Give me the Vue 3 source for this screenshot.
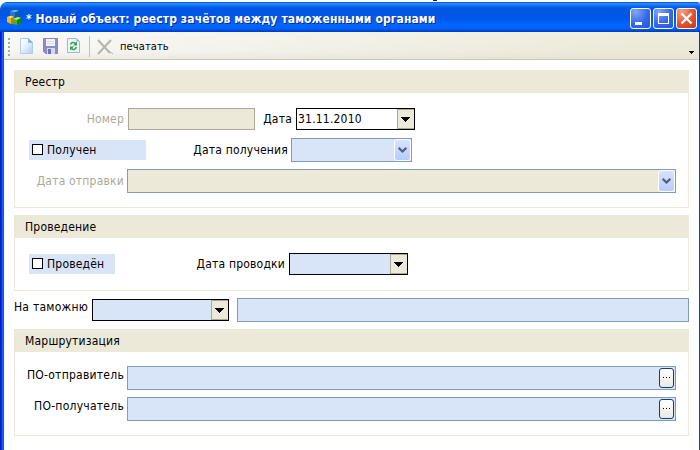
<script setup>
const toolbarDots = [0, 1, 2, 3, 4]
</script>

<template>
  <div class="window">
    <div class="above"><i></i></div>
    <header class="titlebar">
      <svg class="app-icon" width="15" height="16" viewBox="0 0 15 16">
        <path d="M3 1l6-1 3 1v7l-4 1-5-1z" fill="#2878c8" />
        <path d="M3 1l6-1 3 1-4 1z" fill="#85c8f4" />
        <path d="M8 2l4-1v7l-4 1z" fill="#125aa5" />
        <path d="M0 7l4-1 3 1v6l-3 1-4-2z" fill="#f3b51d" />
        <path d="M0 7l4-1 3 1-3 1z" fill="#ffe777" />
        <path d="M4 8l3-1v6l-3 1z" fill="#ce7900" />
        <path d="M6 9l5-2 3 1v5l-4 2-4-1z" fill="#45b51e" />
        <path d="M6 9l5-2 3 1-4 2z" fill="#b0ea76" />
        <path d="M10 10l4-2v5l-4 2z" fill="#16801a" />
      </svg>
      <span class="title">* Новый объект: реестр зачётов между таможенными органами</span>
      <div class="controls">
        <button class="ctl"><svg width="21" height="21"><path d="M5 14h7v3H5z" fill="#fff" /></svg></button>
        <button class="ctl"><svg width="21" height="21"><path d="M5 5h11v11H5zM6 8v7h9V8z" fill="#fff" fill-rule="evenodd" /></svg></button>
        <button class="ctl close"><svg width="21" height="21"><path d="M5.5 5.5l10 10M15.5 5.5l-10 10" stroke="#fff" stroke-width="2.2" /></svg></button>
      </div>
    </header>
    <div class="body">
      <div class="frame-left"></div>
      <div class="client">
        <div class="toolbar">
          <div class="grip"><i v-for="d in toolbarDots" :key="d"></i></div>
          <svg class="new" width="14" height="17" viewBox="0 0 14 17">
            <defs><linearGradient id="paper" x2="1" y2="1"><stop stop-color="#fff" /><stop offset=".4" stop-color="#e9f4fd" /><stop offset="1" stop-color="#a9cff2" /></linearGradient></defs>
            <path d="M.5.5h8l4 4v11H.5z" fill="url(#paper)" stroke="#b4cbe4" />
            <path d="M8.5.5v4h4z" fill="#78b5ec" stroke="#93b9df" />
          </svg>
          <svg class="save" width="16" height="16" viewBox="0 0 16 16">
            <path d="M.5.5h14v15h-12l-2-2z" fill="#8c8ccf" stroke="#8585c2" />
            <path d="M3 1h9v7H3z" fill="#f2f2f7" /><path d="M4 3.5h7M4 5.5h7" stroke="#dedee6" />
            <path d="M4 10h8v6H4z" fill="#d9d9e2" /><path d="M5 11h3v5H5z" fill="#7070ba" />
          </svg>
          <svg class="refresh" width="13" height="16" viewBox="0 0 13 16">
            <path d="M.5.5h9l3 3v11H.5z" fill="#edf5ff" stroke="#9db8dc" />
            <path d="M9.5.5v3h3z" fill="#82b6e6" />
            <path d="M3.5 6.5C4.500 4 7 4 8.500 5.500M9.500 9C8.500 12 6 12 4.500 10.500" fill="none" stroke="#35a447" stroke-width="1.600" />
            <path d="M10 3.500v4H6zM3 12.500v-4h4z" fill="#35a447" />
          </svg>
          <i class="sep"></i>
          <svg class="delete" width="17" height="16" viewBox="0 0 17 16"><path d="M1 1l12 13M14 1L1 15" stroke="#b7b5a8" stroke-width="2" fill="none" /><path d="M12 12l4 3" stroke="#b7b5a8" /></svg>
          <span class="print">печатать</span>
          <svg class="overflow" width="6" height="3"><path d="M0 0h5v1H0zM1 1h3v1H1zM2 2h1v1H2z" /></svg>
        </div>

        <main>
          <section class="group registry">
            <h2>Реестр</h2>
            <div class="row r1">
              <label class="lab muted">Номер</label>
              <div class="field gray number"></div>
              <label class="lab date">Дата</label>
              <div class="field black white w119"><span>31.11.2010</span><b class="drop"><svg width="9" height="5"><path d="M0 0h9v1H0zM1 1h7v1H1zM2 2h5v1H2zM3 3h3v1H3zM4 4h1v1H4z" /></svg></b></div>
            </div>
            <div class="row r2">
              <div class="check wide"><i></i><span>Получен</span></div>
              <label class="lab received">Дата получения</label>
              <div class="field blue w121"><b class="xp"><svg width="9" height="6"><path d="M.7.8l3.800 3.700L8.300.8" /></svg></b></div>
            </div>
            <div class="row r3">
              <label class="lab muted">Дата отправки</label>
              <div class="field blue beige w549"><b class="xp"><svg width="9" height="6"><path d="M.7.8l3.800 3.700L8.300.8" /></svg></b></div>
            </div>
          </section>

          <section class="group posting">
            <h2>Проведение</h2>
            <div class="row p1">
              <div class="check"><i></i><span>Проведён</span></div>
              <label class="lab posted">Дата проводки</label>
              <div class="field black w119"><b class="drop"><svg width="9" height="5"><path d="M0 0h9v1H0zM1 1h7v1H1zM2 2h5v1H2zM3 3h3v1H3zM4 4h1v1H4z" /></svg></b></div>
            </div>
          </section>

          <div class="customs">
            <label>На таможню</label>
            <div class="field black w137"><b class="drop"><svg width="9" height="5"><path d="M0 0h9v1H0zM1 1h7v1H1zM2 2h5v1H2zM3 3h3v1H3zM4 4h1v1H4z" /></svg></b></div>
            <div class="field blue name"></div>
          </div>

          <section class="group routing">
            <h2>Маршрутизация</h2>
            <div class="row m1">
              <label class="lab">ПО-отправитель</label>
              <div class="field blue w549"><button class="more"><i></i><i></i><i></i></button></div>
            </div>
            <div class="row m2">
              <label class="lab">ПО-получатель</label>
              <div class="field blue w549"><button class="more"><i></i><i></i><i></i></button></div>
            </div>
          </section>
        </main>
      </div>
    </div>
  </div>
</template>

<style>
body { margin: 0; overflow: hidden; background: #fff; }
</style>
<style scoped>
* { box-sizing: border-box; }
svg { display: block; flex: none; }
.window { width: 700px; height: 450px; display: flex; flex-direction: column; font: 12px/16px "DejaVu Sans Condensed", "DejaVu Sans", sans-serif; font-stretch: condensed; letter-spacing: .2px; color: #000; overflow: hidden; }
.above { height: 2px; flex: none; background: #fff; }
.above i { display: block; width: 4px; height: 1px; margin-left: 433px; background: #001a9e; }
.titlebar { height: 30px; flex: none; display: flex; align-items: flex-start; padding-left: 7px; border-radius: 7px 3px 0 0; background: linear-gradient(#0053dc 0, #2b8cfc 6%, #1670f4 12%, #0059e5 20%, #0055e2 35%, #0059ed 57%, #0066ff 78%, #0062fb 88%, #004bd6 95%, #0038ba 100%); }
.app-icon { margin-top: 8px; }
.title { margin: 9px 0 0 4px; font: bold 12px/16px "DejaVu Sans Condensed", "DejaVu Sans", sans-serif; font-stretch: condensed; white-space: pre; color: #fff; text-shadow: 1px 1px #0a2894; letter-spacing: .11px; }
.controls { display: flex; gap: 2px; margin: 6px 3px 0 auto; }
.ctl { width: 21px; height: 21px; padding: 0; border: 1px solid #fff; border-radius: 3px; background: radial-gradient(circle at 25% 15%, #82a6f8, #3768e8 55%, #2457d9); }
.ctl svg { margin: -1px; }
.close { background: radial-gradient(circle at 25% 15%, #f4a181, #e15430 55%, #c53a14); }
.body { flex: 1; min-height: 0; display: flex; border-right: 1px solid #0b3dc5; }
.frame-left { width: 4px; flex: none; background: linear-gradient(90deg, #0019cc 0 25%, #0831d9 25% 50%, #166aee 50% 75%, #0855dd 75%); }
.client { flex: 1; min-width: 0; }
.toolbar { height: 28px; display: flex; align-items: flex-start; background: linear-gradient(#ffffff30, transparent 70%, #dedac960), linear-gradient(90deg, #f7f7f6, #ece9d8 90%); border-bottom: 1px solid #cbc7b6; }
.grip { display: flex; flex-direction: column; gap: 2px; margin: 6px 0 0 4px; width: 2px; }
.grip i { width: 2px; height: 2px; background: #aaa99f; }
.new { margin: 6px 0 0 10px; }
.save { margin: 6px 0 0 9px; }
.refresh { margin: 6px 0 0 8px; }
.sep { width: 1px; height: 21px; background: #c5c2b3; margin: 4px 0 0 9px; }
.delete { margin: 7px 0 0 7px; }
.print { font-size: 11px; letter-spacing: .1px; margin: 7px 0 0 6px; white-space: nowrap; }
.overflow { margin: 19px 4px 0 auto; }
main { padding: 10px 10px 0; }
.group { border: 1px solid #ece9d8; border-top: 0; width: 675px; }
h2 { margin: 0 -1px; height: 23px; background: #ece9d8; font: inherit; padding: 4px 0 0 11px; }
.registry { height: 138px; }
.posting { height: 76px; margin-top: 7px; }
.routing { height: 107px; margin-top: 7px; }
.row { display: flex; align-items: flex-start; }
.row .lab { width: 109px; text-align: right; padding-top: 4px; white-space: nowrap; flex: none; }
.row .muted { color: #aca899; }
.r1 .muted { padding-top: 3px; }
.field { height: 22px; border: 1px solid #7f9db9; background: #d8e4f8; display: flex; flex: none; justify-content: flex-end; }
.blue { height: 24px; }
.black { border-color: #000; }
.white { background: #fff; justify-content: space-between; }
.white span { padding: 2px 0 0 1px; }
.gray { border-color: #aca899; background: #ece9d8; }
.beige { background: #ece9d8; }
.w119 { width: 119px; }
.w121 { width: 121px; }
.w137 { width: 137px; }
.w549 { width: 549px; }
.drop { width: 17px; height: 20px; border: 1px solid #aca899; border-width: 1px 0 1px 1px; background: #ece9d8; padding: 7px 0 0 3px; }
.xp { width: 17px; height: 22px; border: 1px solid #fff; border-radius: 3px; background: linear-gradient(#d8e3ff, #b9cbff); padding: 7px 0 0 3px; }
.xp path { fill: none; stroke: #4d6185; stroke-width: 2.2; }
.r1 { margin-top: 15px; }
.number { width: 127px; margin-left: 4px; }
.row .date { width: 37px; margin-right: 4px; padding-top: 3px; }
.r2 { margin: 8px 0 0 14px; }
.check { width: 86px; height: 20px; background: #d8e4f8; display: flex; align-items: flex-start; padding: 2px 0 0 3px; white-space: nowrap; }
.check i { width: 11px; height: 11px; border: 1px solid #000; background: #fff; margin: 2px 4px 0 0; }
.wide { width: 117px; margin-top: 2px; }
.row .received { width: 142px; margin-right: 3px; }
.r3 { margin-top: 7px; }
.r3 .field, .m1 .field, .m2 .field { margin-left: 3px; }
.p1 { margin: 15px 0 0 14px; }
.p1 .check { margin-top: 1px; }
.row .posted { width: 170px; margin-right: 4px; padding-top: 3px; }
.customs { height: 31px; display: flex; padding-top: 7px; }
.customs label { width: 78px; white-space: nowrap; padding-top: 1px; letter-spacing: .25px; }
.customs .black { margin-top: 1px; }
.name { width: 452px; margin-left: 8px; }
.m1 { margin-top: 14px; }
.m2 { margin-top: 7px; }
.m1 .lab, .m2 .lab { padding-top: 1px; letter-spacing: .25px; }
.more { width: 15px; height: 20px; margin: 1px 1px 0 0; padding: 0 0 1px; border: 1px solid #0c4374; border-radius: 3px; background: linear-gradient(#fff, #ebe9e0); display: flex; align-items: center; justify-content: center; gap: 2px; }
.more i { width: 1px; height: 1px; background: #000; }
</style>
